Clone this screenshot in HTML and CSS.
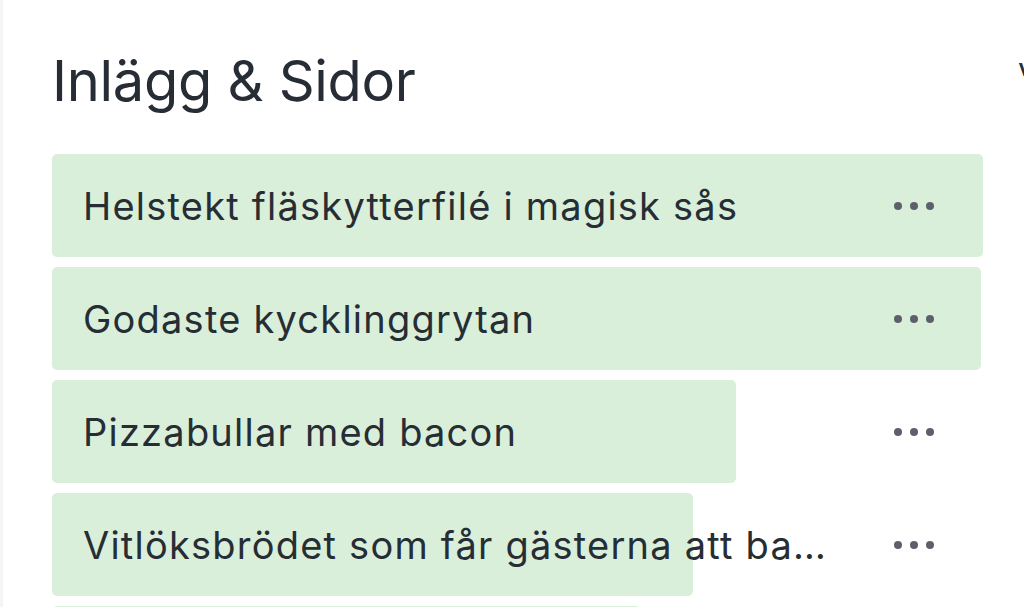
FILE: index.html
```html
<!DOCTYPE html>
<html lang="sv">
<head>
<meta charset="utf-8">
<title>Inlägg &amp; Sidor</title>
<link rel="stylesheet" href="styles.css">
</head>
<body>
<div class="page">
  <div class="rail"></div>
  <main class="panel">
    <header class="head">
      <h1 class="title">Inlägg &amp; Sidor</h1>
      <span class="peek">V</span>
    </header>
    <ul class="list">
      <li class="row">
        <div class="bar" style="width:100%"></div>
        <div class="content"><span class="label">Helstekt fläskytterfilé i magisk sås</span><span class="dots"><i></i><i></i><i></i></span></div>
      </li>
      <li class="row">
        <div class="bar" style="width:99.8%"></div>
        <div class="content"><span class="label">Godaste kycklinggrytan</span><span class="dots"><i></i><i></i><i></i></span></div>
      </li>
      <li class="row">
        <div class="bar" style="width:73.5%"></div>
        <div class="content"><span class="label">Pizzabullar med bacon</span><span class="dots"><i></i><i></i><i></i></span></div>
      </li>
      <li class="row">
        <div class="bar" style="width:68.9%"></div>
        <div class="content"><span class="label">Vitlöksbrödet som får gästerna att ba…</span><span class="dots"><i></i><i></i><i></i></span></div>
      </li>
      <li class="row">
        <div class="bar" style="width:63.3%"></div>
        <div class="content"><span class="dots"><i></i><i></i><i></i></span></div>
      </li>
    </ul>
  </main>
</div>
</body>
</html>
```
FILE: styles.css
```css
html, body {
  margin: 0;
  padding: 0;
  background: #ffffff;
  overflow: hidden;
}
body {
  width: 1024px;
  height: 607px;
  font-family: Inter, "Noto Sans", "Liberation Sans", sans-serif;
  color: #262d35;
}
.page {
  display: flex;
  height: 607px;
  overflow: hidden;
}
.rail {
  width: 3px;
  flex: 0 0 3px;
  background: #f5f5f5;
}
.panel {
  flex: 1;
  padding: 0 41px 0 49px;
  min-width: 0;
}
.head {
  display: flex;
  justify-content: space-between;
  align-items: flex-start;
  height: 154px;
  margin-right: -41px;
}
.title {
  margin: 47px 0 0 0;
  font-size: 56px;
  font-weight: 400;
  line-height: 68px;
  letter-spacing: -0.3px;
  color: #272d35;
}
.peek {
  margin-top: 60px;
  margin-right: -8px;
  font-size: 18px;
  font-weight: 700;
  line-height: 20px;
  color: #272d35;
}
.list {
  list-style: none;
  margin: 0;
  padding: 0;
  display: flex;
  flex-direction: column;
  gap: 10px;
}
.row {
  display: grid;
  height: 103px;
}
.bar, .content {
  grid-area: 1 / 1;
}
.bar {
  background: #daefda;
  border-radius: 5px;
  height: 103px;
}
.content {
  display: flex;
  align-items: center;
  justify-content: space-between;
  padding: 0 49px 0 31px;
  min-width: 0;
}
.content .dots:only-child {
  margin-left: auto;
}
.label {
  font-size: 38px;
  font-weight: 420;
  letter-spacing: 1.22px;
  white-space: nowrap;
  overflow: hidden;
  color: #262d35;
}
.dots {
  display: flex;
  gap: 8px;
  flex: 0 0 auto;
}
.dots i {
  width: 8px;
  height: 8px;
  border-radius: 50%;
  background: #5d606c;
}
```
